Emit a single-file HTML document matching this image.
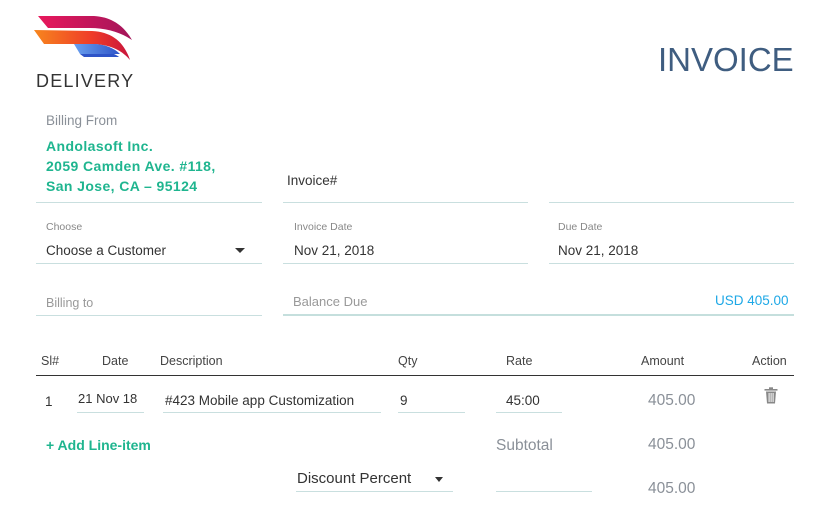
<!DOCTYPE html>
<html><head><meta charset="utf-8">
<style>
*{margin:0;padding:0;box-sizing:border-box}
body{width:831px;height:520px;background:#fff;font-family:"Liberation Sans",sans-serif;position:relative;overflow:hidden;color:#333}
.a{position:absolute;white-space:nowrap;line-height:1}
.l{position:absolute;height:1px;background:#c9dfdf}
.g{color:#1fb58f;font-weight:bold;font-size:14px;letter-spacing:0.4px}
.lab{color:#888;font-size:10.5px}
.val{color:#333;font-size:13.5px}
.h{font-size:12.5px;color:#444}
.gr{color:#8a9098;font-size:15.5px}
</style></head><body>
<svg class="a" style="left:34px;top:14px" width="102" height="52" viewBox="0 0 102 52">
<defs>
<linearGradient id="p" x1="0" x2="1"><stop offset="0" stop-color="#e8185c"/><stop offset="1" stop-color="#a3155a"/></linearGradient>
<linearGradient id="o" x1="0" x2="1"><stop offset="0" stop-color="#f7861e"/><stop offset=".6" stop-color="#ef3c28"/><stop offset="1" stop-color="#c8143c"/></linearGradient>
<linearGradient id="b" x1="0" x2="1"><stop offset="0" stop-color="#6aa0ef"/><stop offset="1" stop-color="#2e54c8"/></linearGradient>
</defs>
<path d="M4 2 L60 2 C78 3 90 12 98 26 C86 18 72 14 56 14 L14 14 Z" fill="url(#p)"/>
<path d="M0 16 L58 17 C78 18 90 28 96 46 C86 34 72 30 56 30 L10 30 Z" fill="url(#o)"/>
<path d="M40 30 L62 30 C72 31 80 34 86 40 L46 40 Z" fill="url(#b)"/>
<path d="M46 40 L80 40 C82 41 84 42 85 43 L50 43 Z" fill="#2e54c8"/>
</svg>
<div class="a" style="left:36px;top:72px;font-size:18px;letter-spacing:1.2px;color:#333">DELIVERY</div>
<div class="a" style="left:658px;top:43px;font-size:33px;color:#3f5d80">INVOICE</div>

<div class="a" style="left:46px;top:114px;font-size:13.5px;color:#8a9098">Billing From</div>
<div class="a g" style="left:46px;top:139px">Andolasoft Inc.</div>
<div class="a g" style="left:46px;top:159px">2059 Camden Ave. #118,</div>
<div class="a g" style="left:46px;top:179px">San Jose, CA – 95124</div>
<div class="l" style="left:36px;top:202px;width:226px"></div>

<div class="a val" style="left:287px;top:174px">Invoice#</div>
<div class="l" style="left:283px;top:202px;width:245px"></div>
<div class="l" style="left:549px;top:202px;width:245px"></div>

<div class="a lab" style="left:46px;top:222px">Choose</div>
<div class="a val" style="left:46px;top:244px">Choose a Customer</div>
<div class="a" style="left:235px;top:248px;width:0;height:0;border-left:5px solid transparent;border-right:5px solid transparent;border-top:5px solid #333"></div>
<div class="l" style="left:36px;top:263px;width:226px"></div>

<div class="a lab" style="left:294px;top:222px">Invoice Date</div>
<div class="a val" style="left:294px;top:244px">Nov 21, 2018</div>
<div class="l" style="left:283px;top:263px;width:245px"></div>
<div class="a lab" style="left:558px;top:222px">Due Date</div>
<div class="a val" style="left:558px;top:244px">Nov 21, 2018</div>
<div class="l" style="left:549px;top:263px;width:245px"></div>

<div class="a" style="left:46px;top:297px;font-size:12.5px;color:#999">Billing to</div>
<div class="l" style="left:36px;top:315px;width:226px"></div>
<div class="a" style="left:293px;top:295px;font-size:13px;color:#999">Balance Due</div>
<div class="a" style="left:715px;top:294px;font-size:13.5px;color:#1ea8e6">USD 405.00</div>
<div class="l" style="left:283px;top:314px;width:511px;height:2px;background:#c5dfdd"></div>

<div class="a h" style="left:41px;top:355px">Sl#</div>
<div class="a h" style="left:102px;top:355px">Date</div>
<div class="a h" style="left:160px;top:355px">Description</div>
<div class="a h" style="left:398px;top:355px">Qty</div>
<div class="a h" style="left:506px;top:355px">Rate</div>
<div class="a h" style="left:641px;top:355px">Amount</div>
<div class="a h" style="left:752px;top:355px">Action</div>
<div class="l" style="left:36px;top:375px;width:758px;background:#333"></div>

<div class="a val" style="left:45px;top:395px">1</div>
<div class="a val" style="left:78px;top:392px;font-size:13px">21 Nov 18</div>
<div class="l" style="left:77px;top:412px;width:67px"></div>
<div class="a val" style="left:165px;top:394px">#423 Mobile app Customization</div>
<div class="l" style="left:163px;top:412px;width:218px"></div>
<div class="a val" style="left:400px;top:394px">9</div>
<div class="l" style="left:398px;top:412px;width:67px"></div>
<div class="a val" style="left:506px;top:394px">45:00</div>
<div class="l" style="left:496px;top:412px;width:66px"></div>
<div class="a gr" style="left:648px;top:393px">405.00</div>
<svg class="a" style="left:764px;top:387px" width="14" height="17" viewBox="0 0 14 17"><rect x="0.5" y="2" width="13" height="1.6" fill="#888"/><rect x="5" y="0.3" width="4" height="2" fill="#888"/><path d="M2 4.5 L12 4.5 L11 16.5 L3 16.5 Z" fill="#888"/><rect x="4.6" y="6" width="1" height="9" fill="#fff"/><rect x="6.6" y="6" width="1" height="9" fill="#fff"/><rect x="8.6" y="6" width="1" height="9" fill="#fff"/></svg>

<div class="a" style="left:46px;top:438px;font-size:14px;color:#1fb58f;font-weight:bold">+ Add Line-item</div>
<div class="a gr" style="left:496px;top:438px">Subtotal</div>
<div class="a gr" style="left:648px;top:437px">405.00</div>

<div class="a" style="left:297px;top:471px;font-size:15px;color:#333">Discount Percent</div>
<div class="a" style="left:435px;top:477px;width:0;height:0;border-left:4.5px solid transparent;border-right:4.5px solid transparent;border-top:5px solid #333"></div>
<div class="l" style="left:296px;top:491px;width:157px"></div>
<div class="l" style="left:496px;top:491px;width:96px"></div>
<div class="a gr" style="left:648px;top:481px">405.00</div>
</body></html>
